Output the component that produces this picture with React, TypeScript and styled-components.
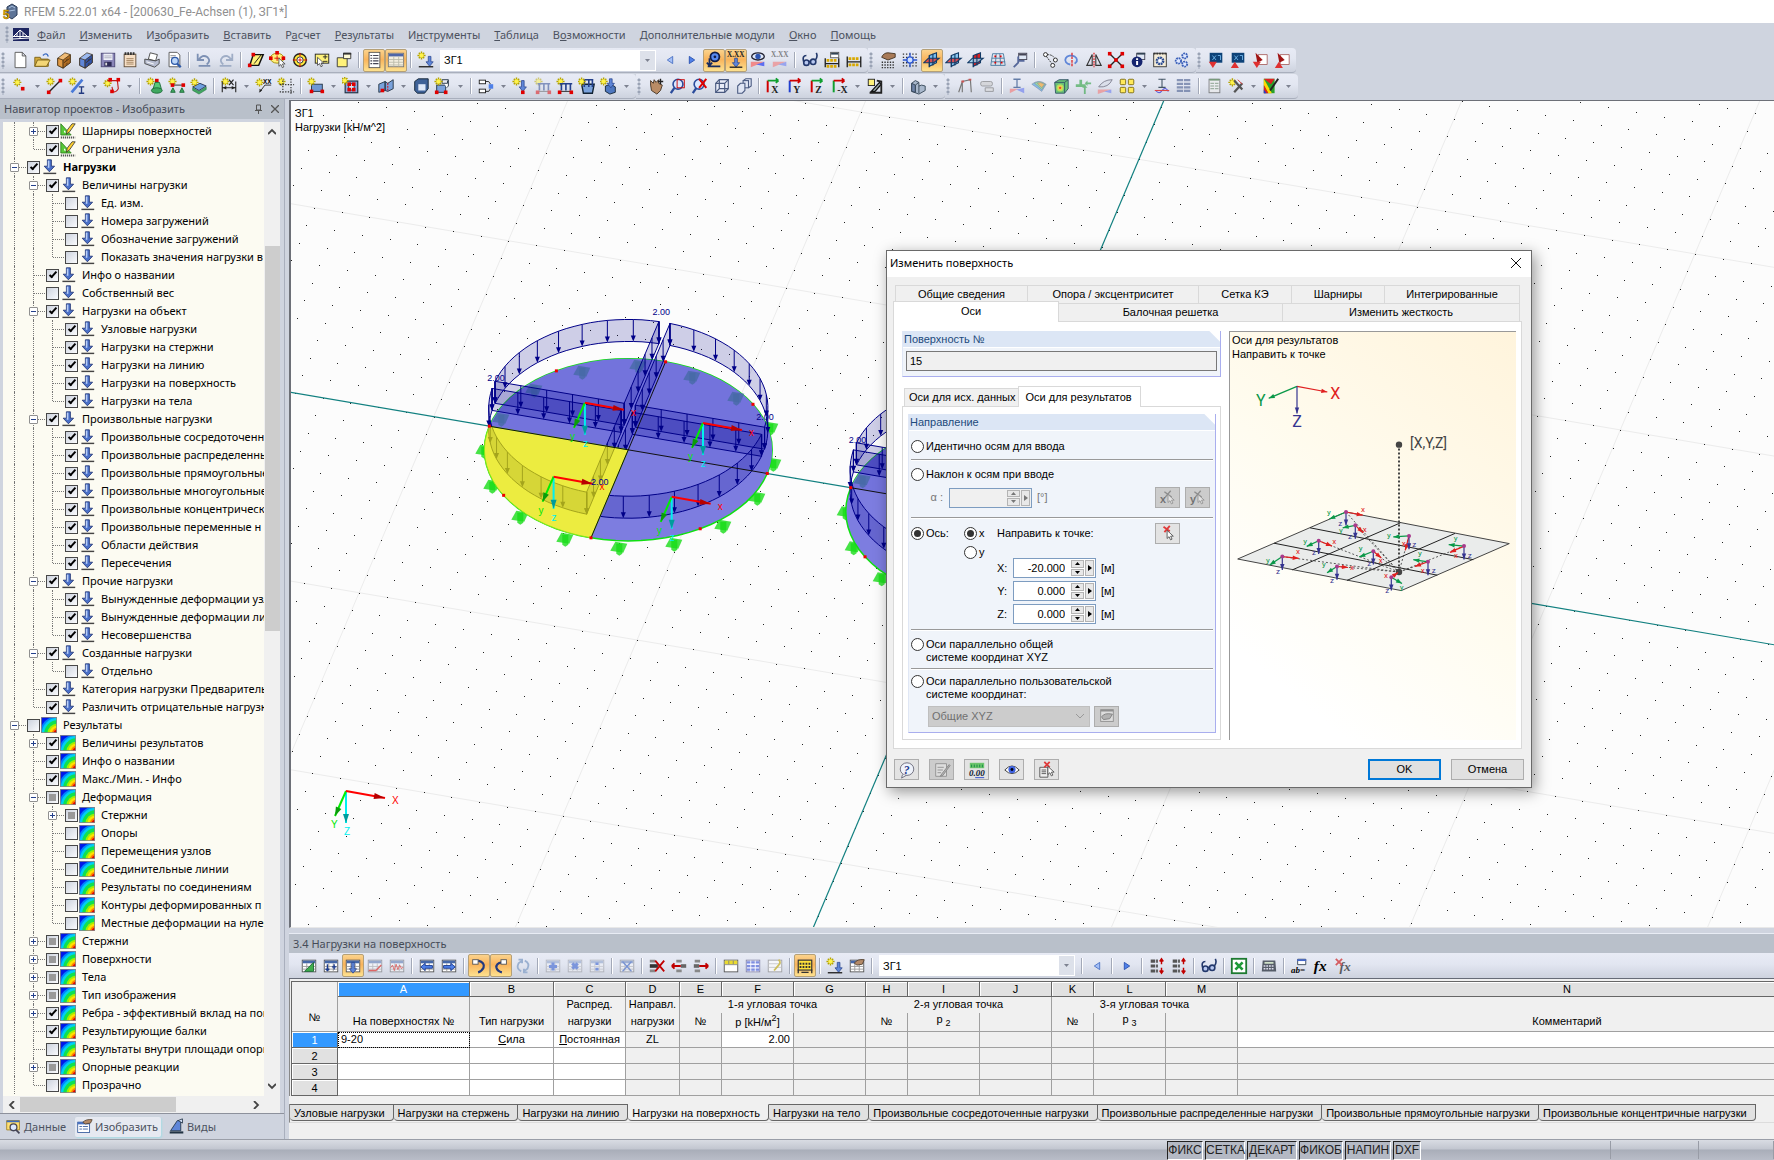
import React, { Fragment, ReactNode, useEffect, useRef } from "react";
import styled, { createGlobalStyle, css } from "styled-components";

const uiFont = `"Noto Sans", "Open Sans", sans-serif`;
const gridFont = `"Liberation Sans", Arial, sans-serif`;

const GlobalStyle = createGlobalStyle`
  *, *::before, *::after { box-sizing: border-box; }
  body { margin: 0; background: #cfd4df; font: 11px/14px ${uiFont}; color: #000; overflow: hidden; }
  button, input, select { font: inherit; color: inherit; margin: 0; }
  button { padding: 0; border: 0; background: none; }
  svg { display: block; }
`;

/* ------------------------------------------------------------------ */
/* Icons                                                                */
/* ------------------------------------------------------------------ */

const star = (x = 5, y = 5) => (
  <g transform={`translate(${x} ${y})`}>
    <path d="M0-4.5V4.5M-4.5 0H4.5M-3-3 3 3M3-3-3 3" stroke="#b5a400" strokeWidth="1.6" />
    <circle r="2.4" fill="#fff34a" />
  </g>
);
const cursor = (x: number, y: number) => (
  <path d={`M${x} ${y}v9l2.200-2 1.600 3.500 1.700-.8-1.600-3.300h3z`} fill="#fff" stroke="#444" strokeWidth=".9" />
);
const node = (x: number, y: number, c = "#e00000") => <rect x={x - 2} y={y - 2} width="4" height="4" fill={c} />;
const downArrow = (x: number, y: number, h = 9) => (
  <path d={`M${x - 1.5} ${y}h3v${h - 4}h2.500l-4 5-4-5h2.500z`} fill="#5f86d8" stroke="#24408c" strokeWidth=".8" />
);
const tableBack = (o = 1) => (
  <g opacity={o}>
    <rect x="2.500" y="3.500" width="15" height="13" fill="#fff" stroke="#555" />
    <rect x="3" y="4" width="14" height="3" fill="#4668a8" />
    <path d="M3 10.500h14M3 13.500h14M7.500 7v9M12.500 7v9" stroke="#999" />
  </g>
);
const drawer = (a: string, b: string, c: string) => (
  <g stroke="#3a2a14" strokeWidth=".8">
    <path d="M3 8l8-6 6 2v9l-8 6-6-3z" fill={a} />
    <path d="M3 8l6 2v9l-6-3z" fill={b} />
    <path d="M9 10l8-6v9l-8 6z" fill={c} />
    <path d="M10 13l6-4.500M12 10.500l2-1.500M12 15l2-1.500" fill="none" />
  </g>
);
const plane = (a: string, b: string) => (
  <g strokeWidth="1.200">
    <path d="M7 5l8-3v11l-8 4z" fill={a} stroke="#123a66" />
    <path d="M1 13l5-5h12l-6 5z" fill={b} stroke="#123a66" fillOpacity=".85" />
    <path d="M7 5v13M11 3v13" stroke="#123a66" />
  </g>
);
const axes = (c1: string, c2: string, t: string) => (
  <g fill="none">
    <path d="M3 17V4" stroke={c1} strokeWidth="2.200" />
    <path d="M3 4h12m0 0l-3-2.500m3 2.500l-3 2.500" stroke={c2} strokeWidth="2" />
    <text x="7" y="17.500" fontSize="11" fontWeight="700" fontFamily="Liberation Serif, serif" fill="#222">{t}</text>
  </g>
);

const icons: Record<string, ReactNode> = {
  new: <path d="M4.500 1.500h8l4 4v13h-12zM12.500 1.500v4h4" fill="#fff" stroke="#555" />,
  open: <g stroke="#7a6218"><path d="M2 7h6l1 2h8v8H2z" fill="#d3a93c" /><path d="M2 17l3-7h14l-4 7z" fill="#f3d676" /><path d="M11 5q4-4 6 1" fill="none" stroke="#3a6ac0" strokeWidth="1.500" /></g>,
  boxO: drawer("#f0bc78", "#e09a45", "#b06c22"),
  boxB: drawer("#9ab8f0", "#5f86d8", "#3153a8"),
  save: <g><rect x="2.500" y="2.500" width="15" height="15" fill="#8a86b8" stroke="#4f4b78" /><rect x="5" y="3" width="10" height="7" fill="#eceef6" /><path d="M6 5.500h8M6 7.500h8" stroke="#aab" /><rect x="6" y="12" width="8" height="5" fill="#2e2b55" /><rect x="7" y="13" width="2" height="3" fill="#ddd" /></g>,
  clip: <g><rect x="3.500" y="3.500" width="13" height="14" fill="#f6dfc6" stroke="#5f4a34" /><path d="M4 3h12" stroke="#333" strokeWidth="3" strokeDasharray="2 1" /><path d="M6 8.500h8M6 10.500h8M6 12.500h8M6 14.500h8" stroke="#a0805c" /></g>,
  print: <g stroke="#444"><path d="M6 9l2-7 8 2-2 7z" fill="#fff" /><path d="M2 9l12 2 4-2v5l-5 4-11-4z" fill="#b6bcd0" /><path d="M4 12l8 2.500" stroke="#fff" /></g>,
  preview: <g><path d="M4.500 1.500h9l3 3v13h-12z" fill="#fff" stroke="#555" /><path d="M6 5h6M6 7h6" stroke="#999" /><circle cx="11" cy="11" r="3.800" fill="#bcd6f8" stroke="#2f5aa8" strokeWidth="1.400" /><path d="M13.500 14l4 4" stroke="#2f5aa8" strokeWidth="2.500" /></g>,
  undo: <path d="M3 3v7h7M4 10q4-7 10-3 4 4-1 8M4 16.500h13" fill="none" stroke="#7d90b4" strokeWidth="2" />,
  redo: <path d="M17 3v7h-7M16 10q-4-7-10-3-4 4 1 8M3 16.500h13" fill="none" stroke="#9fadc6" strokeWidth="2" />,
  poly: <g><path d="M3 16L7 4h11l-5 12z" fill="#fff27a" stroke="#111" strokeWidth="1.600" />{node(7, 4)}{node(3, 16)}<path d="M8 14l8-10" stroke="#111" /></g>,
  selC: <g><ellipse cx="9" cy="8" rx="7.500" ry="5.500" fill="#fff27a" stroke="#a08800" />{node(2, 8)}{node(9, 2)}{node(16, 8)}<path d="M9 5v6M6 8h6" stroke="#e00000" />{cursor(11, 8)}</g>,
  target: <g><circle cx="10" cy="10" r="7" fill="#ffe93a" stroke="#222" strokeWidth="1.500" /><circle cx="10" cy="10" r="3.500" fill="#fff" stroke="#222" /><path d="M10 2v16M2 10h16" stroke="#e00000" strokeDasharray="4 2" /></g>,
  selBox: <g><rect x="2.500" y="3.500" width="15" height="10" fill="#fff27a" stroke="#222" /><path d="M11 6.500h5M13.500 4v5M11 11.500h5" stroke="#222" />{cursor(5, 7)}</g>,
  layer: <g stroke="#333"><path d="M2.500 7.500h11v10h-11z" fill="#fff27a" /><path d="M9.500 2.500h8v6h-8z" fill="#fffbd8" /><path d="M9 3h9" strokeWidth="2" /></g>,
  list: <g><rect x="4.500" y="1.500" width="12" height="17" fill="#fff" stroke="#555" /><path d="M6 5h2M9 5h6M6 8h2M9 8h6M6 11h2M9 11h6M6 14h2M9 14h6" stroke="#445" strokeWidth="1.200" /></g>,
  table: <g><rect x="1.500" y="2.500" width="17" height="15" fill="#f4efe0" stroke="#777" /><rect x="2" y="3" width="16" height="3" fill="#4f66a8" /><path d="M2 9.500h16M2 12.500h16M2 15.500h16M7.500 6v11M13 6v11" stroke="#bba" /></g>,
  starLoad: <g>{star(5, 5)}{downArrow(14, 6, 10)}<path d="M2 17.500h16" stroke="#222" strokeWidth="1.500" /></g>,
  prev: <path d="M13 6v8l-6-4z" fill="#a4bff6" stroke="#4a70c4" />,
  next: <path d="M7 6v8l6-4z" fill="#4f80e8" stroke="#2850b0" />,
  zoomLoad: <g><circle cx="11" cy="6.500" r="5" fill="#5a8af0" stroke="#101c48" strokeWidth="2" /><circle cx="11" cy="6.500" r="1.500" fill="#101c48" /><path d="M3 17h14M5 8v8M2 13l3 3 3-3" fill="none" stroke="#182c60" strokeWidth="2" /></g>,
  xxx: <g><text x="0" y="7" fontSize="8" fontWeight="700" fontFamily="Liberation Serif, serif" fill="#222">X.XX</text>{downArrow(10, 8, 9)}<path d="M3 18h14" stroke="#222" strokeWidth="1.500" /></g>,
  eyeLoad: <g><ellipse cx="10" cy="6" rx="7" ry="4" fill="#dfe8fa" stroke="#223" strokeWidth="1.500" /><circle cx="10" cy="6" r="3" fill="#2e55b0" /><path d="M2 12h15l-15 6z" fill="#f08a8a" /><path d="M17 12v5l-9-2z" fill="#5d6df0" /></g>,
  xxxDim: <g opacity=".7"><text x="0" y="7" fontSize="8" fontWeight="700" fontFamily="Liberation Serif, serif" fill="#555">X.XX</text><path d="M2 12h15l-15 6z" fill="#f08a8a" /><path d="M17 12v5l-9-2z" fill="#7d8df0" /></g>,
  glasses: <g fill="#b8c8f0" stroke="#23386c" strokeWidth="1.800"><circle cx="6" cy="13" r="3" /><circle cx="13.500" cy="12" r="3" /><path d="M3 12Q1 5 6 5M16 10q3-4 1-8M9 12l2-1" fill="none" /></g>,
  calcA: <g><rect x="8.500" y="1.500" width="9" height="6" fill="#fff" stroke="#555" /><path d="M9 3h8" stroke="#345" strokeWidth="2" /><path d="M2.500 8v10M17.500 8v10M3 14h15" stroke="#222" strokeWidth="1.500" /><path d="M4 10.500h12M4 17h12" stroke="#d8a800" strokeWidth="3" strokeDasharray="3 1" /></g>,
  calcB: <g><path d="M2.500 6v12M17.500 6v12M3 12h15" stroke="#222" strokeWidth="1.500" /><path d="M4 8.500h12M4 15.500h12" stroke="#d8a800" strokeWidth="3" strokeDasharray="3 1" /></g>,
  handGrid: <g><path d="M3 7q2-5 7-5l8 1v4l-8 3z" fill="#a87a58" stroke="#432" /><path d="M3 12.500h14M3 15.500h14M3 18.500h14" stroke="#333" strokeWidth="1.500" strokeDasharray="1.500 1.500" /></g>,
  snap: <g><path d="M2 3.500h16M2 7h16M2 13h16M2 16.500h16" stroke="#333" strokeWidth="1.500" strokeDasharray="1.500 2" /><path d="M10 2v16M2 10h16" stroke="#2a55d0" strokeWidth="1.500" /><circle cx="10" cy="10" r="3.500" fill="#cfe0ff" stroke="#2a55d0" strokeWidth="1.500" /></g>,
  planeA: plane("#7cc0f0", "#e43a3a"),
  planeB: plane("#8ccaf4", "#e43a3a"),
  planeC: plane("#e02020", "#9ad0ee"),
  gridR: <g fill="none" stroke="#4a7aa0"><path d="M4 3h12l2 13H2zM3 8h14M3 12h15M8 3l-1 13M12 3l1 13" /><path d="M6 6h2M12 6h2M6 13h2M13 13h2" stroke="#e00000" strokeWidth="2" /></g>,
  find: <g><rect x="8.500" y="2.500" width="9" height="7" fill="#dfe7f5" stroke="#445" /><path d="M9 4h8" stroke="#445" strokeWidth="2" /><path d="M8 6v7l-5 5M8 11h7" fill="none" stroke="#56689a" strokeWidth="2" /></g>,
  nodes: <g fill="#fff" stroke="#222"><circle cx="5" cy="4" r="2.200" /><circle cx="16" cy="10" r="2.200" /><circle cx="13" cy="16" r="2.200" /><path d="M6 6l6 8M7 4q6 0 8 4" fill="none" strokeDasharray="2 1" /></g>,
  rotate: <g fill="none" strokeWidth="2"><path d="M8 15a6.500 5 0 1 1 5-1l3-3" stroke="#5f86d8" /><path d="M10 2v16" stroke="#e00000" strokeWidth="1.200" strokeDasharray="3 1" /></g>,
  mirror: <g fill="none" stroke="#333" strokeWidth="1.200"><path d="M8 4v12H2zM12 4v12h6z" /><path d="M10 2v16" stroke="#e00000" strokeDasharray="2 1" /></g>,
  explode: <g><path d="M3 3l14 14M17 3L3 17" stroke="#222" strokeWidth="1.500" />{node(3, 3)}{node(17, 3)}{node(3, 17)}{node(17, 17)}{node(10, 10)}</g>,
  info: <g><rect x="8.500" y="2.500" width="9" height="7" fill="#dfe7f5" stroke="#445" /><path d="M9 3h9" stroke="#345" strokeWidth="2" /><circle cx="9" cy="12" r="6" fill="#15246e" /><path d="M9 8v2M9 11v4.500" stroke="#fff" strokeWidth="2.200" /></g>,
  gear: <g><rect x="3" y="2.500" width="14" height="15" fill="#f4ecd8" stroke="#333" /><path d="M3 3h14" stroke="#333" strokeWidth="2" strokeDasharray="2 1" /><circle cx="10" cy="11" r="3.500" fill="#fff" stroke="#2a4a90" strokeWidth="2.800" strokeDasharray="2 .7" /></g>,
  gears: <g fill="#dfe8ff" stroke="#3a5fb8" strokeWidth="2" strokeDasharray="2 .8"><circle cx="6" cy="11" r="3" /><circle cx="13" cy="5.500" r="2.800" /><circle cx="13" cy="14.500" r="2.800" /></g>,
  modA: <g><rect x="3" y="2" width="14" height="11" fill="#0d4278" /><path d="M6 5l4 5M10 5l-4 5M12 5h3v5" stroke="#6fb4ea" fill="none" /><path d="M2 12h9l-4.500 7z" fill="#e03030" /></g>,
  modB: <g><rect x="3" y="2" width="14" height="11" fill="#0d4278" /><path d="M6 5l4 5M10 5l-4 5M12 5h3v5" stroke="#6fb4ea" fill="none" /><path d="M2 19h9l-4.500-7z" fill="#e03030" /></g>,
  modC: <g><path d="M8 4h10v11H8z" fill="#fff" stroke="#a66" /><path d="M5 2l8 8-6 3z" fill="#a01414" /><path d="M2 12h9l-4.500 7z" fill="#e03030" /></g>,
  modD: <g><path d="M8 4h10v11H8z" fill="#fff" stroke="#a66" /><path d="M5 2l8 8-6 3z" fill="#a01414" /><path d="M2 19h9l-4.500-7z" fill="#e03030" /></g>,

  mkNode: <g>{star(7, 6)}{node(13, 13)}</g>,
  mkLine: <g>{star()}<path d="M3 17L16 4" stroke="#222" strokeWidth="1.500" />{node(3, 17)}{node(16, 4)}</g>,
  mkMember: <g>{star()}<path d="M4 17L16 3" stroke="#4a7ad8" strokeWidth="3" /><path d="M12 11h6M15 11v7M12 18h6" stroke="#223a80" strokeWidth="1.500" /></g>,
  mkPoly: <g>{star(5, 7)}<path d="M5 4h11l1 9q-3 5-6 3l-1-5" fill="none" stroke="#c01818" strokeWidth="1.200" />{node(8, 3)}{node(17, 3)}{node(10, 16)}</g>,
  mkSupport: <g>{node(12, 4)}<path d="M10 6h5l2 7h-9z" fill="#58c878" stroke="#1d6a38" /><ellipse cx="12" cy="15" rx="6" ry="3" fill="#3fa860" stroke="#1d6a38" />{star()}</g>,
  mkLineSup: <g>{star()}<path d="M5 9h12" stroke="#222" />{node(5, 9)}{node(17, 9)}<path d="M3 17l2.500-5L8 17zM13 17l2.500-5 2.500 5z" fill="#3fa860" stroke="#1d6a38" /></g>,
  mkSurfSup: <g><path d="M3 11l8-4 7 3-8 5z" fill="#6fa0e0" stroke="#235" /><path d="M3 12v3l7 4 8-5v-3l-8 5z" fill="#3fa860" stroke="#1d6a38" strokeWidth=".6" />{star(5, 6)}</g>,
  dim: <g>{star(6, 5)}<path d="M2.500 5v12M17.500 5v12M3 12h14" stroke="#222" strokeWidth="1.200" /><path d="M3 12l4-2v4zM17 12l-4-2v4z" fill="#222" /><path d="M10 3l5 6M15 3l-5 6" stroke="#222" strokeWidth="1.300" /></g>,
  annot: <g>{star(5, 6)}<path d="M5 17l6-8h7" fill="none" stroke="#222" /><path d="M5 17v-4l3 2z" fill="#222" /><text x="9" y="8" fontSize="7" fontWeight="700" fontFamily={gridFont}>XX</text></g>,
  guides: <g>{star(5, 5)}<path d="M6.500 4v15M15.500 2v17M3 8.500h16M3 16.500h16" stroke="#333" strokeWidth="1.300" strokeDasharray="1.500 1.500" /></g>,
  mkSurf: <g><rect x="5" y="8" width="12" height="8" fill="#6f98d4" stroke="#234" />{star(5, 5)}{node(5, 16)}{node(17, 16)}</g>,
  mkOpen: <g><rect x="3.500" y="4.500" width="14" height="13" fill="#88a8dc" stroke="#234" strokeWidth="1.300" /><rect x="7.500" y="7.500" width="6" height="7" fill="#dce6f8" stroke="#234" />{node(8, 8)}{node(13, 8)}{node(8, 14)}{node(13, 14)}{star(3, 4)}</g>,
  mkSolidA: <g><path d="M2 8l7-3v10l-7 2zM9 5l3 2 6-4v10l-6 3-3-1z" fill="#7aa2dc" stroke="#234" /><path d="M12 7v9" stroke="#e00000" strokeDasharray="2 1" />{node(6, 15)}</g>,
  mkSolidB: <g><path d="M3 5l4-3h11v11l-4 5H6l-3-3z" fill="#3f6298" stroke="#123" /><path d="M7 8h8v7H7z" fill="#dfe8f8" /></g>,
  mkSolidC: <g><rect x="3" y="9" width="10" height="8" fill="#7aa2dc" stroke="#234" /><path d="M9 3h7v7l-2 2M9 3v4h6V4" fill="#fff" stroke="#234" />{star(5, 5)}{node(3, 17)}{node(13, 17)}</g>,
  hinge: <g><rect x="2.500" y="3.500" width="7" height="4" fill="#fff" stroke="#222" /><rect x="2.500" y="13.500" width="7" height="4" fill="#fff" stroke="#222" /><path d="M9 5h4l2 3M9 16h4l2-3" fill="none" stroke="#222" /><rect x="13" y="8" width="5" height="5" fill="#4f80e8" /></g>,
  loadN: <g>{star()}{downArrow(12, 4, 11)}{node(12, 17)}</g>,
  loadM: <g opacity=".5">{star()}<path d="M4 7.500h14M6 8v7M11 8v7M16 8v7" stroke="#24408c" strokeWidth="1.800" /><path d="M3 16h15" stroke="#444" />{node(4, 17)}{node(17, 17)}</g>,
  loadL: <g>{star()}<path d="M4 7.500h14M6 8v7M11 8v7M16 8v7" stroke="#24408c" strokeWidth="1.800" /><path d="M3 16h15" stroke="#222" />{node(4, 17)}{node(17, 17)}</g>,
  loadS: <g><path d="M4 8h14l-2 10H6z" fill="#7aa2dc" stroke="#123" strokeWidth="1.500" /><path d="M7 3h10M7 3v8M12 3v8M16 3v8" stroke="#24408c" strokeWidth="1.800" />{star(4, 5)}</g>,
  loadV: <g><path d="M6 10l6-2 5 3v6l-6 2-5-3z" fill="#4f78c0" stroke="#123" />{star(4, 5)}{downArrow(12, 2, 9)}</g>,
  pan: <g><path d="M4 9V4l3 3 1-4 2 3 3-3v4l4 2-2 6-4 4-6-4z" fill="#b98c66" stroke="#432" /><path d="M12 5h6M15 2v6" stroke="#222" strokeWidth="1.500" /></g>,
  zoomWin: <g><circle cx="10" cy="8" r="5.500" fill="#dbe8ff" stroke="#2b4c9c" strokeWidth="1.800" /><rect x="9" y="3" width="8" height="9" fill="none" stroke="#c00" /><path d="M6 12l-4 6" stroke="#2b4c9c" strokeWidth="2.500" /></g>,
  zoomX: <g><circle cx="9" cy="8" r="5.500" fill="#dbe8ff" stroke="#2b4c9c" strokeWidth="1.800" /><path d="M9 2l8 10M17 2l-8 10" stroke="#d00" strokeWidth="2.200" /><path d="M6 12l-4 6" stroke="#2b4c9c" strokeWidth="2.500" /></g>,
  cube: <g fill="#e9edf8" stroke="#4a5a80" strokeWidth="1.300"><path d="M3 7l4-4h10v10l-4 4H3z" /><path d="M3 7h10v10M13 7l4-4M7 3v10l-4 4M7 13h10" fill="none" /></g>,
  iso: <g fill="#dfe5f4" stroke="#4a5a80" strokeWidth="1.200"><path d="M9 4l3-2h6v8l-3 2" /><rect x="9" y="4" width="6" height="8" /><path d="M3 10l3-3h5v8l-3 3H3z" /></g>,
  axX: axes("#d00000", "#10a030", "X"),
  axY: axes("#2040d0", "#d00000", "Y"),
  axZ: axes("#d00000", "#10a030", "Z"),
  axN: axes("#10a030", "#d00000", "-X"),
  clipView: <g><path d="M6 16l9-10 2 2-7 8z" fill="#9aa" stroke="#111" strokeWidth="1.500" /><rect x="2.500" y="2.500" width="7" height="7" fill="#fff27a" stroke="#222" /><path d="M4 17.500h14M12 4l5 1v12" fill="none" stroke="#222" strokeWidth="2" /></g>,
  solid: <g stroke="#345" fill="#a9b8cc"><path d="M3 7l4-3 4 2v4l3-1 4 1v5l-7 4-8-3z" /><path d="M7 9v8M7 9l4-3M11 10v8" fill="none" /><path d="M3 7l4 2v8l-4-1z" fill="#6f84a8" /></g>,
  frame: <g fill="none" stroke="#777" strokeWidth="1.300"><path d="M3 17L7 5l9-2 1 14M7 5v12" /><path d="M6 5h3M14 3h3" stroke="#c55" strokeWidth="2" /></g>,
  roll: <g opacity=".6"><rect x="3" y="5" width="13" height="5" rx="2" fill="#ccc" stroke="#666" /><path d="M8 12h9v4H8z" fill="#ddd" stroke="#666" /></g>,
  resN: <g opacity=".75"><path d="M6 2.500h8M10 3v8M6 11.500h8" stroke="#3a5a90" strokeWidth="1.400" /><path d="M2 13h10l-10 5z" fill="#f08a8a" /><path d="M18 12v6l-9-4z" fill="#7d8df0" /></g>,
  resS: <g opacity=".8" strokeWidth=".6" stroke="#678"><path d="M2 8q7-6 16 0l-5 8q-5-4-11-8z" fill="#6fb0e8" /><path d="M5 7q6-4 12 1l-4 6q-4-4-8-7z" fill="#88dc90" /><path d="M8 7q4-2 8 1l-3 4q-3-3-5-5z" fill="#f0b050" /></g>,
  resV: <g><path d="M3 6l5-3h10v10l-4 5H4z" fill="#68c078" stroke="#356" /><path d="M3 6h11v12M14 6l4-3" fill="none" stroke="#356" /><circle cx="9" cy="12" r="4" fill="#b8e060" /><circle cx="9" cy="12" r="2.500" fill="#f4d04a" /><circle cx="9" cy="12" r="1.300" fill="#e05030" /></g>,
  resR: <g fill="#4fae60" opacity=".75"><path d="M6 3h3v5h4v3H2V8h4zM11 19v-7h-2l3-3 3 3h-2v7zM19 6h-4V4l-3 3 3 3V8h4z" /></g>,
  resC: <g opacity=".7"><path d="M3 11q5-8 15-8-4 9-15 8z" fill="#d8dde8" stroke="#556" /><path d="M2 14h15l-15 5z" fill="#f08a8a" /><path d="M17 14v4l-8-2z" fill="#7d8df0" /></g>,
  panels: <g fill="#ffe95a" stroke="#7a6a10"><rect x="2.500" y="2.500" width="6" height="6" rx="1" /><rect x="11.500" y="2.500" width="6" height="6" rx="1" /><rect x="2.500" y="11.500" width="6" height="6" rx="1" /><rect x="11.500" y="11.500" width="6" height="6" rx="1" /></g>,
  section: <g fill="none" stroke="#456" strokeWidth="1.200"><path d="M6 2.500h8M10 3v8M6 11.500h8" /><path d="M3 15q4 5 7 0 4-5 7 1" stroke="#55d" /><path d="M2 15h16" stroke="#d44" /></g>,
  rep: <g opacity=".8"><path d="M2 3.500h16M2 7.500h16M2 11.500h16M2 15.500h16" stroke="#7080a8" strokeWidth="2.500" strokeDasharray="7 1" /></g>,
  doc: <g opacity=".7"><rect x="4.500" y="2.500" width="12" height="15" fill="#eee" stroke="#555" /><path d="M5 3h11" stroke="#4a7a4a" strokeWidth="2" /><path d="M6 7h4M11 7h4M6 10h4M11 10h4M6 13h4M11 13h4" stroke="#5a7a5a" /></g>,
  tune: <g>{star(6, 6)}<path d="M8 4l9 10M8 17l9-10" stroke="#555" strokeWidth="2.500" /><path d="M12 3l5 5" stroke="#d33" /></g>,
  colorBar: <g><rect x="2" y="2" width="12" height="16" fill="#2aa02a" /><path d="M2 2h12l-4 6z" fill="#e02020" /><path d="M2 2l9 16H7L2 9z" fill="#ffd800" /><path d="M2 9l5 9H2z" fill="#e02020" /><path d="M2 14l3 4H2z" fill="#2040d0" /><path d="M18 2L9 15" stroke="#222" strokeWidth="2.200" /></g>,

  tNew: <g>{tableBack()}<path d="M5 16L15 6v10z" fill="#3fae4c" stroke="#1d6a38" /></g>,
  tPlus: <g>{tableBack()}<path d="M6 8v7M4 13l2 2 2-2M11 11h5M13.500 8v6" stroke="#1a3a90" strokeWidth="1.500" fill="none" /></g>,
  tLoad: <g>{tableBack()}{downArrow(10, 6, 11)}</g>,
  tRes: <g>{tableBack(0.5)}<path d="M3 15h8l6-6" stroke="#d66" fill="none" strokeWidth="1.500" /></g>,
  tWave: <g>{tableBack(0.5)}<path d="M3 12l2-3 2 6 2-7 2 6 2-5 2 4 2-2" stroke="#d66" fill="none" /></g>,
  tLeft: <g>{tableBack()}<path d="M3 11l5-4v2.500h8v3H8V15z" fill="#4f80e8" stroke="#1a3a90" /></g>,
  tRight: <g>{tableBack()}<path d="M17 11l-5-4v2.500H4v3h8V15z" fill="#4f80e8" stroke="#1a3a90" /></g>,
  curA: <g fill="none" stroke="#223a80" strokeWidth="2.500"><path d="M9 4q8 2 6 8-2 4-6 5" /><rect x="3" y="3" width="6" height="5" fill="#fff" stroke="#555" strokeWidth="1" /></g>,
  curB: <g fill="none" stroke="#223a80" strokeWidth="2.500"><path d="M11 6q-7 1-6 6 1 4 6 5" /><rect x="10" y="3" width="6" height="5" fill="#fff" stroke="#555" strokeWidth="1" /></g>,
  sync: <path d="M8 16Q2 13 5 7l4-3M12 4q6 3 3 9l-4 3M5 3h4v4M15 17h-4v-4" fill="none" stroke="#9ab0d0" strokeWidth="2" />,
  dPlus: <g opacity=".6">{tableBack(0.5)}<path d="M10 6v9M5.500 10.500h9" stroke="#3a62d0" strokeWidth="3.500" /></g>,
  dStar: <g opacity=".6">{tableBack(0.5)}<path d="M7 7l6 6M13 7l-6 6" stroke="#3a62d0" strokeWidth="3.500" /></g>,
  dDots: <g opacity=".6">{tableBack(0.5)}<path d="M10 6v3M10 12v3" stroke="#3a62d0" strokeWidth="3.500" /></g>,
  dX: <g opacity=".7">{tableBack(0.6)}<path d="M5 5l10 11M15 5L5 16" stroke="#4a70c8" strokeWidth="1.500" /></g>,
  rowDel: <g><path d="M2 4.500h6M2 15.500h6" stroke="#888" strokeWidth="3" /><path d="M2 10h9" stroke="#333" strokeWidth="4" /><path d="M8 4l10 12M18 4L8 16" stroke="#c00000" strokeWidth="2" /></g>,
  rowOut: <g><path d="M7 4.500h6M7 15.500h6" stroke="#888" strokeWidth="3" /><path d="M12 10h6" stroke="#666" strokeWidth="4" /><path d="M12 10H2m0 0l3-3m-3 3l3 3" stroke="#c00000" strokeWidth="2" fill="none" /></g>,
  rowIn: <g><path d="M3 4.500h6M3 15.500h6" stroke="#888" strokeWidth="3" /><path d="M2 10h6" stroke="#666" strokeWidth="4" /><path d="M8 10h10m0 0l-3-3m3 3l-3 3" stroke="#c00000" strokeWidth="2" fill="none" /></g>,
  fmtA: <g><rect x="2.500" y="3.500" width="15" height="13" fill="#fff" stroke="#555" /><path d="M3 6h14" stroke="#eadb30" strokeWidth="4" /><path d="M3 8.500h14M7.500 4v4M12.500 4v4" stroke="#887" /></g>,
  fmtB: <g><rect x="2.500" y="3.500" width="15" height="13" fill="#eef" stroke="#88a" /><path d="M3 6h14M3 10h14M3 14h14" stroke="#7f8fe0" strokeWidth="2.500" /><path d="M7.500 4v12M12.500 4v12" stroke="#fff" /></g>,
  fmtC: <g opacity=".7"><rect x="2.500" y="3.500" width="15" height="13" fill="#fff" stroke="#888" /><path d="M3 7.500h14M3 11.500h14" stroke="#bbb" /><path d="M14 3q3 3 0 6l-5 6" stroke="#c8b020" strokeWidth="2" fill="none" /></g>,
  calcY: <g><rect x="2.500" y="3.500" width="15" height="11" fill="#ffe23a" stroke="#333" strokeWidth="1.300" /><path d="M4 7.500h12M4 11h12" stroke="#333" strokeWidth="2.200" strokeDasharray="2 1.300" /><path d="M2.500 14v4M17.500 14v4M6 17h8" stroke="#333" strokeWidth="1.500" /></g>,
  tEdit: <g>{tableBack()}<path d="M7 7q3-5 11-4l-2 5-6 1z" fill="#b48a68" stroke="#543" /></g>,
  rowsUp: <g><path d="M3 4.500h8M3 10h8M3 15.500h8" stroke="#555" strokeWidth="3.500" strokeDasharray="5 1" /><path d="M15 3v5M15 12v5M13 5l2-3 2 3M13 15l2 3 2-3" stroke="#c00000" strokeWidth="1.600" fill="none" /></g>,
  excel: <g><rect x="2" y="2" width="16" height="16" fill="#fff" stroke="#1d7a30" strokeWidth="2" /><path d="M6 6l8 8M14 6l-8 8" stroke="#1d9a38" strokeWidth="3" /></g>,
  calc: <g><path d="M3 4h14l1 12H2z" fill="#555c68" /><path d="M5 6.500h10" stroke="#cfe0c8" strokeWidth="2" /><path d="M4 10h12M4 13h12" stroke="#dde" strokeWidth="1.500" strokeDasharray="2 1" /></g>,
  abEq: <g><path d="M8.500 2.500h9v6h-9z" fill="#fff" stroke="#345" /><path d="M8 3.500h10" stroke="#4668c8" strokeWidth="2" /><text x="1" y="18" fontSize="10" fontStyle="italic" fontWeight="700" fontFamily="Liberation Serif, serif">ab=</text></g>,
  fx: <text x="2" y="15" fontSize="17" fontStyle="italic" fontWeight="700" fontFamily="Liberation Serif, serif">fx</text>,
  fxDel: <g opacity=".6"><text x="6" y="16" fontSize="15" fontStyle="italic" fontWeight="700" fontFamily="Liberation Serif, serif">fx</text><path d="M2 2l7 7M9 2L2 9" stroke="#c00" strokeWidth="2" /></g>,

  treeLoad: <g><path d="M8 1h5v8h4l-6.500 7L4 9h4z" fill="#4a70c8" stroke="#1c2f70" /><path d="M9.500 2v9" stroke="#b9cff8" strokeWidth="2" /><path d="M3 18h16" stroke="#444" strokeWidth="1.800" /></g>,
  treeRule: <g><path d="M1 1v14h13z" fill="#58c838" stroke="#2a7a1a" /><path d="M5 9v3h3z" fill="#fff" /><path d="M19 1l-7 10-4 3 1-5 6-8z" fill="#ffd030" stroke="#333" /><path d="M1 18h18" stroke="#555" strokeWidth="2.500" strokeDasharray="1.500 1" /></g>,
  treeRes: (
    <g>
      <rect width="20" height="20" fill="#0018e8" />
      <circle cx="21" cy="21" r="22.500" fill="#0080ff" />
      <circle cx="21" cy="21" r="20" fill="#00d0f0" />
      <circle cx="21" cy="21" r="17" fill="#10e050" />
      <circle cx="21" cy="21" r="13" fill="#a0f000" />
      <circle cx="21" cy="21" r="10.500" fill="#ffe000" />
      <circle cx="21" cy="21" r="7.500" fill="#ff8000" />
      <circle cx="21" cy="21" r="5.500" fill="#e00000" />
      <rect x=".5" y=".5" width="19" height="19" fill="none" stroke="#888" />
    </g>
  ),
  navData: <g><path d="M2 3h15v11H2z" fill="#ffe070" stroke="#a08020" /><path d="M2 4h15" stroke="#3a6ac0" strokeWidth="2" /><circle cx="10" cy="11" r="4" fill="#dbe8ff" stroke="#445" strokeWidth="1.500" /><path d="M13 14l4 4" stroke="#445" strokeWidth="2" /></g>,
  navShow: <g><rect x="2" y="5" width="14" height="12" fill="#fff" stroke="#345a9c" /><path d="M2 6h14" stroke="#4a72c0" strokeWidth="3" /><path d="M4 10h3M8 10h6M4 13h3M8 13h6" stroke="#345a9c" /><path d="M8 5q4-4 11-3l-2 4-6 1z" fill="#b48a68" stroke="#543" /></g>,
  navViews: <g><path d="M3 15l8-12h4v12z" fill="#5f86d8" stroke="#234" /><path d="M2 17h16" stroke="#234" strokeWidth="2.500" /><path d="M12 3l5-2v5z" fill="#dbe8ff" stroke="#234" /></g>,

  help: <g><ellipse cx="10" cy="9" rx="7.500" ry="7" fill="#eef2fa" stroke="#667" /><text x="6.500" y="14" fontSize="13" fontWeight="700" fontStyle="italic" fontFamily="Liberation Serif, serif" fill="#1a3a90">?</text><path d="M5 15l-1 4 5-3" fill="#eef2fa" stroke="#667" /></g>,
  edit: <g opacity=".5"><path d="M3 3h12v14H3z" fill="#eee" stroke="#555" /><path d="M5 7h7M5 10h6M5 13h4" stroke="#555" /><path d="M18 4l-8 10-2 3 3-1 8-11z" fill="#999" stroke="#444" /></g>,
  units: <g><path d="M2 2h16v6H2z" fill="#6cc46c" /><path d="M4 4v3M7 4v3M10 4v3M13 4v3M16 4v3" stroke="#184" /><text x="1" y="17" fontSize="10" fontStyle="italic" fontWeight="700" fontFamily="Liberation Serif, serif" fill="#123">0.00</text><path d="M8 18.500h10" stroke="#24c" /></g>,
  eye: <g><path d="M2 10q8-9 16 0-8 8-16 0z" fill="#fff" stroke="#333" /><circle cx="10" cy="9.500" r="4" fill="#3f63e0" /><circle cx="10" cy="9.500" r="1.600" fill="#001" /></g>,
  pickDoc: <g><path d="M2 7h9v11H2z" fill="#eee" stroke="#555" /><path d="M4 10h5M4 12h5M4 14h5" stroke="#555" /><path d="M7 1l6 6M13 1L7 7" stroke="#e03a3a" strokeWidth="2" />{cursor(11, 6)}</g>,
  pick: <g><path d="M5 2l7 5M12 1L6 8" stroke="#e03a3a" strokeWidth="2" />{cursor(9, 6)}</g>,
  pickX: <g opacity=".45"><text x="1" y="16" fontSize="12" fontWeight="700" fontFamily={gridFont}>x</text><path d="M6 3l8 6M13 2L7 9" stroke="#444" strokeWidth="1.500" />{cursor(10, 6)}</g>,
  pickY: <g opacity=".45"><text x="1" y="16" fontSize="12" fontWeight="700" fontFamily={gridFont}>y</text><path d="M6 3l8 6M13 2L7 9" stroke="#444" strokeWidth="1.500" />{cursor(10, 6)}</g>,
  csEdit: <g opacity=".5"><rect x="3" y="3" width="14" height="13" fill="#eee" stroke="#555" /><path d="M3 4h14" stroke="#555" strokeWidth="2" /><path d="M4 11q3-5 12-3l-3 5-7 1z" fill="#999" stroke="#333" /></g>,
};

const Glyph = ({ name, size = 20 }: { name: string; size?: number }) => (
  <svg width={size} height={size} viewBox="0 0 20 20" aria-hidden="true">
    {icons[name]}
  </svg>
);

/* ------------------------------------------------------------------ */
/* Window chrome                                                        */
/* ------------------------------------------------------------------ */

const Window = styled.div`
  display: flex;
  flex-direction: column;
  height: 100vh;
  background: #cfd4df;
`;
const TitleBar = styled.header`
  display: flex;
  align-items: center;
  gap: 6px;
  height: 23px;
  padding-left: 2px;
  background: #fff;
  color: #8f8f8f;
  font: 12px/20px Roboto, ${uiFont};
`;
const MenuBar = styled.nav`
  display: flex;
  align-items: center;
  height: 25px;
  padding: 0 0 2px 4px;
  color: #4c5260;
`;
const MenuButton = styled.button`
  height: 20px;
  padding: 0 7px;
  &:first-of-type { margin-left: 1px; }
`;
const Grip = styled.span`
  flex: none;
  width: 6px;
  height: 17px;
  margin-right: 3px;
  background: radial-gradient(circle at 3px 2px, #9aa3b5 1px, transparent 2px) 0 0 / 6px 4px;
`;
const BarRow = styled.div<{ $h: number }>`
  display: flex;
  height: ${(p) => p.$h}px;
  background: #cfd4df;
`;
const Band = styled.div`
  display: flex;
  align-items: center;
  height: 25px;
  padding-right: 3px;
  border-bottom: 1px solid #a9afbd;
  border-radius: 0 4px 4px 0;
  background: linear-gradient(#e8ebf5, #e2e6f1 45%, #cdd2de);
`;
const ToolButton = styled.button<{ $on?: boolean }>`
  display: grid;
  place-items: center;
  flex: none;
  width: 22px;
  height: 23px;
  border: 1px solid transparent;
  ${(p) =>
    p.$on &&
    css`
      border-color: #b5a077;
      border-radius: 2px;
      background: linear-gradient(#fbd38d, #f9b45c 45%, #fde18f);
    `}
`;
const DropButton = styled.button`
  display: grid;
  place-items: center;
  flex: none;
  width: 13px;
  height: 23px;
`;
const Separator = styled.span`
  flex: none;
  width: 1px;
  height: 16px;
  margin: 0 4px 0 3px;
  background: #a3a9b8;
  box-shadow: 1px 0 #fff;
`;
const Combo = styled.div<{ $width: number }>`
  display: grid;
  grid-template-columns: 1fr 15px;
  align-items: stretch;
  flex: none;
  width: ${(p) => p.$width}px;
  height: 21px;
  margin: 0 3px;
  border: 1px solid #fff;
  background: #fff;
  font: 11px/18px ${gridFont};
  select {
    grid-area: 1 / 1 / 2 / 3;
    appearance: none;
    border: 0;
    padding: 0 18px 0 3px;
    background: transparent;
    outline: none;
  }
  span {
    grid-area: 1 / 2 / 2 / 3;
    display: grid;
    place-items: center;
    background: #dde1ea;
    pointer-events: none;
  }
`;

const Triangle = () => (
  <svg width="5" height="3" viewBox="0 0 5 3" aria-hidden="true">
    <path d="M0 0h5L2.500 3z" fill="#7d8290" />
  </svg>
);

/* A tool strip: "|" is a separator, a leading "+" marks a pressed tool,
   a trailing ".v" marks a tool with a drop-down part. */
const Tools = ({ items }: { items: string }) => (
  <>
    {items.split(" ").map((raw, i) => {
      if (raw === "|") return <Separator key={i} />;
      const on = raw.startsWith("+");
      const drop = raw.endsWith(".v");
      const name = raw.replace("+", "").replace(".v", "");
      return (
        <Fragment key={i}>
          <ToolButton $on={on} aria-label={name} aria-pressed={on || undefined}>
            <Glyph name={name} size={18} />
          </ToolButton>
          {drop && (
            <DropButton aria-label={`${name} menu`}>
              <Triangle />
            </DropButton>
          )}
        </Fragment>
      );
    })}
  </>
);

const LoadCaseSelect = ({ width, id }: { width: number; id: string }) => (
  <Combo $width={width}>
    <select id={id} aria-label="Загружение" defaultValue="lc1">
      <option value="lc1">ЗГ1</option>
    </select>
    <span>
      <Triangle />
    </span>
  </Combo>
);

const menus: [string, string, string][] = [
  ["", "Ф", "айл"],
  ["", "И", "зменить"],
  ["И", "з", "образить"],
  ["", "В", "ставить"],
  ["Р", "а", "счет"],
  ["", "Р", "езультаты"],
  ["И", "н", "струменты"],
  ["", "Т", "аблица"],
  ["В", "о", "зможности"],
  ["", "Д", "ополнительные модули"],
  ["", "О", "кно"],
  ["", "П", "омощь"],
];

/* ------------------------------------------------------------------ */
/* Navigator                                                            */
/* ------------------------------------------------------------------ */

const Workspace = styled.div`
  display: grid;
  grid-template-columns: 285px minmax(0, 1fr);
  column-gap: 4px;
  flex: 1;
  min-height: 0;
`;
const Navigator = styled.aside`
  display: flex;
  flex-direction: column;
  min-height: 0;
  border-right: 1px solid #a9afbd;
`;
const PaneTitle = styled.h2`
  display: flex;
  align-items: center;
  flex: none;
  gap: 8px;
  height: 20px;
  margin: 0 0 3px;
  padding: 0 5px 0 4px;
  background: #b9c0ca;
  color: #454b57;
  font: 11px/18px ${uiFont};
  svg:first-of-type { margin-left: auto; }
`;
const TreeFrame = styled.div`
  display: grid;
  grid-template-columns: minmax(0, 1fr) 16px;
  grid-template-rows: minmax(0, 1fr) 17px;
  flex: 1;
  min-height: 0;
  margin: 0 4px 0 3px;
  background: #f0f0f0;
`;
const Tree = styled.ul`
  margin: 0;
  padding: 0 0 0 2px;
  overflow: hidden;
  list-style: none;
  background: #fcfbf2;
`;
const TreeItem = styled.li`
  display: flex;
  align-items: center;
  height: 18px;
  white-space: nowrap;
`;
const Guide = styled.span<{ $line?: boolean; $own?: boolean; $last?: boolean }>`
  display: grid;
  place-items: center;
  flex: none;
  position: relative;
  width: 19px;
  height: 18px;
  &::before {
    content: "";
    position: absolute;
    left: 9px;
    top: 0;
    height: ${(p) => (p.$last ? 9 : 18)}px;
    border-left: ${(p) => (p.$line || p.$own ? "1px dotted #777" : "0")};
  }
  &::after {
    content: "";
    position: absolute;
    left: 10px;
    top: 9px;
    width: 11px;
    border-top: ${(p) => (p.$own ? "1px dotted #777" : "0")};
  }
`;
const Expander = styled.button`
  display: grid;
  place-items: center;
  z-index: 1;
  width: 9px;
  height: 9px;
  border: 1px solid #909090;
  border-radius: 1px;
  background: #fff;
`;
const TreeLabel = styled.label<{ $bold?: boolean }>`
  display: flex;
  align-items: center;
  height: 18px;
  font-weight: ${(p) => (p.$bold ? 700 : 400)};
  svg { margin: 0 6px 0 1px; flex: none; }
`;
const Box = styled.input<{ $mixed?: boolean }>`
  appearance: none;
  display: grid;
  place-items: center;
  flex: none;
  width: 13px;
  height: 13px;
  margin: 0 0 0 3px;
  border: 1px solid #484848;
  background: linear-gradient(135deg, #cdd3de, #fafbfd);
  &::after {
    content: "";
    width: ${(p) => (p.$mixed ? 7 : 4)}px;
    height: 7px;
    background: ${(p) => (p.$mixed ? "#999" : "transparent")};
  }
  &:checked::after {
    height: 8px;
    margin-top: -2px;
    border: solid #000;
    border-width: 0 2px 2px 0;
    transform: rotate(42deg);
  }
`;

type Row = [depth: number, exp: string, state: "x" | "o" | "m", icon: string, text: string];
const L = "treeLoad";
const R = "treeRes";
const tree: Row[] = [
  [1, "+", "x", "treeRule", "Шарниры поверхностей"],
  [1, "", "x", "treeRule", "Ограничения узла"],
  [0, "-", "x", L, "Нагрузки"],
  [1, "-", "x", L, "Величины нагрузки"],
  [2, "", "o", L, "Ед. изм."],
  [2, "", "o", L, "Номера загружений"],
  [2, "", "o", L, "Обозначение загружений"],
  [2, "", "o", L, "Показать значения нагрузки в"],
  [1, "", "x", L, "Инфо о названии"],
  [1, "", "o", L, "Собственный вес"],
  [1, "-", "x", L, "Нагрузки на объект"],
  [2, "", "x", L, "Узловые нагрузки"],
  [2, "", "x", L, "Нагрузки на стержни"],
  [2, "", "x", L, "Нагрузки на линию"],
  [2, "", "x", L, "Нагрузки на поверхность"],
  [2, "", "x", L, "Нагрузки на тела"],
  [1, "-", "x", L, "Произвольные нагрузки"],
  [2, "", "x", L, "Произвольные сосредоточенные"],
  [2, "", "x", L, "Произвольные распределенные"],
  [2, "", "x", L, "Произвольные прямоугольные"],
  [2, "", "x", L, "Произвольные многоугольные"],
  [2, "", "x", L, "Произвольные концентрические"],
  [2, "", "x", L, "Произвольные переменные н"],
  [2, "", "x", L, "Области действия"],
  [2, "", "x", L, "Пересечения"],
  [1, "-", "x", L, "Прочие нагрузки"],
  [2, "", "x", L, "Вынужденные деформации узла"],
  [2, "", "x", L, "Вынужденные деформации линии"],
  [2, "", "x", L, "Несовершенства"],
  [1, "-", "x", L, "Созданные нагрузки"],
  [2, "", "o", L, "Отдельно"],
  [1, "", "x", L, "Категория нагрузки Предварительное"],
  [1, "", "x", L, "Различить отрицательные нагрузки"],
  [0, "-", "o", R, "Результаты"],
  [1, "+", "x", R, "Величины результатов"],
  [1, "", "x", R, "Инфо о названии"],
  [1, "", "x", R, "Макс./Мин. - Инфо"],
  [1, "-", "m", R, "Деформация"],
  [2, "+", "m", R, "Стержни"],
  [2, "", "o", R, "Опоры"],
  [2, "", "o", R, "Перемещения узлов"],
  [2, "", "o", R, "Соединительные линии"],
  [2, "", "o", R, "Результаты по соединениям"],
  [2, "", "o", R, "Контуры деформированных п"],
  [2, "", "o", R, "Местные деформации на нулевой"],
  [1, "+", "m", R, "Стержни"],
  [1, "+", "m", R, "Поверхности"],
  [1, "+", "m", R, "Тела"],
  [1, "+", "m", R, "Тип изображения"],
  [1, "+", "x", R, "Ребра - эффективный вклад на поверхности"],
  [1, "", "x", R, "Результирующие балки"],
  [1, "", "o", R, "Результаты внутри площади опоры"],
  [1, "+", "m", R, "Опорные реакции"],
  [1, "", "o", R, "Прозрачно"],
];

const continues = (i: number, level: number) => {
  if (level === 0) return true;
  for (let j = i + 1; j < tree.length; j++) {
    if (tree[j][0] < level) return false;
    if (tree[j][0] === level) return true;
  }
  return false;
};

const TreeCheck = ({ state, id }: { state: Row[2]; id: string }) => {
  const ref = useRef<HTMLInputElement>(null);
  useEffect(() => {
    if (ref.current) ref.current.indeterminate = state === "m";
  }, [state]);
  return <Box ref={ref} id={id} type="checkbox" $mixed={state === "m"} defaultChecked={state === "x"} />;
};

const ScrollV = styled.div`
  display: flex;
  flex-direction: column;
  align-items: center;
  padding: 6px 0;
  i { flex: 1; width: 15px; background: linear-gradient(transparent 11.6%, #cdcdcd 11.6% 52.3%, transparent 52.3%); }
`;
const ScrollH = styled.div`
  grid-column: 1 / 3;
  display: flex;
  align-items: center;
  padding: 0 20px 0 5px;
  i { flex: 1; height: 15px; margin: 0 6px 0 4px; background: linear-gradient(90deg, #cdcdcd 69%, transparent 69%); }
`;
const Chevron = ({ d }: { d: string }) => (
  <svg width="8" height="8" viewBox="0 0 8 8" aria-hidden="true">
    <path d={d} fill="none" stroke="#444" strokeWidth="1.800" />
  </svg>
);
const NavTabs = styled.div`
  display: flex;
  align-items: center;
  flex: none;
  height: 26px;
  padding-left: 4px;
  gap: 6px;
  border-top: 1px solid #8d919c;
`;
const NavTab = styled.button<{ $on?: boolean }>`
  display: flex;
  align-items: center;
  gap: 2px;
  height: 20px;
  padding: 0 3px 0 1px;
  color: #4c5260;
  ${(p) => p.$on && css`background: #e6e9f1; box-shadow: 1px 1px 2px #a9dce4; border-radius: 2px;`}
`;

const NavigatorPane = () => (
  <Navigator>
    <PaneTitle>
      Навигатор проектов - Изобразить
      <svg width="9" height="10" viewBox="0 0 9 10"><path d="M2.500 1v5h4V1zM1 6.500h7M4.500 7v3" fill="none" stroke="#555" /></svg>
      <svg width="8" height="8" viewBox="0 0 8 8"><path d="M0 0l8 8M8 0L0 8" stroke="#555" strokeWidth="1.300" /></svg>
    </PaneTitle>
    <TreeFrame>
      <Tree>
        {tree.map(([depth, exp, state, icon, text], i) => (
          <TreeItem key={i}>
            {Array.from({ length: depth + 1 }, (_, level) => (
              <Guide
                key={level}
                $own={level === depth}
                $line={continues(i, level)}
                $last={level === depth && !continues(i, level)}
              >
                {level === depth && exp && (
                  <Expander aria-label={exp === "+" ? "Развернуть" : "Свернуть"}>
                    <svg width="7" height="7" viewBox="0 0 7 7">
                      <path d={exp === "+" ? "M1 3.500h5M3.500 1v5" : "M1 3.500h5"} stroke="#24418c" />
                    </svg>
                  </Expander>
                )}
              </Guide>
            ))}
            <TreeCheck state={state} id={`tree-${i}`} />
            <TreeLabel htmlFor={`tree-${i}`} $bold={i === 2}>
              <Glyph name={icon} size={16} />
              {text}
            </TreeLabel>
          </TreeItem>
        ))}
      </Tree>
      <ScrollV>
        <Chevron d="M0 6l4-4 4 4" />
        <i />
        <Chevron d="M0 2l4 4 4-4" />
      </ScrollV>
      <ScrollH>
        <Chevron d="M6 0L2 4l4 4" />
        <i />
        <Chevron d="M2 0l4 4-4 4" />
      </ScrollH>
    </TreeFrame>
    <NavTabs>
      <NavTab><Glyph name="navData" size={17} />Данные</NavTab>
      <NavTab $on><Glyph name="navShow" size={17} />Изобразить</NavTab>
      <NavTab><Glyph name="navViews" size={17} />Виды</NavTab>
    </NavTabs>
  </Navigator>
);

/* ------------------------------------------------------------------ */
/* 3D model view                                                        */
/* ------------------------------------------------------------------ */

type Pt = [number, number];
const ORIGIN: Pt = [989.7, 511.3];
const UX: Pt = [27.8, 4.73];
const UY: Pt = [-7.46, 17.6];
const world = (a: number, b: number): Pt => [
  ORIGIN[0] + a * UX[0] + b * UY[0],
  ORIGIN[1] + a * UX[1] + b * UY[1],
];
const path = (pts: Pt[], close = true) =>
  "M" + pts.map(([x, y]) => `${x.toFixed(1)} ${y.toFixed(1)}`).join("L") + (close ? "Z" : "");

const Canvas = styled.section`
  position: relative;
  min-height: 0;
  border: 1px solid #6d7078;
  border-width: 1px 0 0 2px;
  border-bottom: 1px solid #e8e8e8;
  background: #fcfcfc;
  > svg { width: 100%; height: 100%; }
`;

const Head = ({ from, to, color, size = 9, w = 3 }: { from: Pt; to: Pt; color: string; size?: number; w?: number }) => {
  const d = Math.hypot(to[0] - from[0], to[1] - from[1]);
  const ux = (to[0] - from[0]) / d;
  const uy = (to[1] - from[1]) / d;
  const b: Pt = [to[0] - ux * size, to[1] - uy * size];
  return <path d={path([to, [b[0] - uy * w, b[1] + ux * w], [b[0] + uy * w, b[1] - ux * w]])} fill={color} />;
};

const Triad = ({ at, upper }: { at: Pt; upper?: boolean }) => {
  const [x, y] = at;
  const ex: Pt = [x + 39, y + 7];
  const ey: Pt = [x - 11, y + 25];
  const ez: Pt = [x, y + 32];
  return (
    <g fontFamily={gridFont} fontSize="10">
      <path d={path([at, ez], false)} stroke="#00f0f0" strokeWidth="2" />
      <Head from={at} to={ez} color="#009c9c" />
      <path d={path([at, ey], false)} stroke="#00f000" strokeWidth="2" />
      <Head from={at} to={ey} color="#0a9c0a" />
      <path d={path([at, ex], false)} stroke="#ff0000" strokeWidth="2" />
      <Head from={at} to={ex} color="#b80000" size={11} />
      <text x={x + 46} y={y + 13} fill="#ff0000">{upper ? "X" : "x"}</text>
      <text x={x - 15} y={y + 37} fill="#00e800">{upper ? "Y" : "y"}</text>
      <text x={x - 2} y={y + 44} fill="#00f0f0">{upper ? "Z" : "z"}</text>
    </g>
  );
};

const radians = (d: number) => (d * Math.PI) / 180;
/* Support symbols, as offsets from the plate centre. */
const supportsFront: Pt[] = [
  [-144, 1], [-136, 36], [-108, 67], [-63, 89], [-9, 98], [46, 94], [95, 76], [129, 48], [145, 14], [142, -22],
];
const supportsBack: Pt[] = [[-127, -31], [-94, -60], [-46, -78], [10, -84], [64, -73], [108, -52]];

const LoadedPlate = ({ a, selected }: { a: number; selected?: boolean }) => {
  const at = (u: number, v: number, z = 0): Pt => {
    const [x, y] = world(a + u * 5, v * 5);
    return [x, y - z];
  };
  const centre = at(0, 0);
  const full = Array.from({ length: 73 }, (_, i) => at(Math.cos((i * Math.PI) / 36), Math.sin((i * Math.PI) / 36)));
  const arcPts = (sx: number, sy: number, n: number): Pt[] =>
    Array.from({ length: n + 1 }, (_, i) => {
      const t = 0.04 + (i / n) * (Math.PI / 2 - 0.08);
      return [sx * Math.cos(t) * 0.97, sy * Math.sin(t) * 0.97] as Pt;
    });
  const linePts = (p: Pt, q: Pt, n: number): Pt[] =>
    Array.from({ length: n + 1 }, (_, i) => [p[0] + ((q[0] - p[0]) * i) / n, p[1] + ((q[1] - p[1]) * i) / n] as Pt);

  const quarter = (sx: number, sy: number, color: string, fill: string) => {
    const walls: [Pt[], Pt[]][] = [
      [arcPts(sx, sy, 24), arcPts(sx, sy, 8)],
      [linePts([sx * 0.97, sy * 0.04], [sx * 0.04, sy * 0.04], 1), linePts([sx * 0.97, sy * 0.04], [sx * 0.04, sy * 0.04], 5)],
      [linePts([sx * 0.04, sy * 0.04], [sx * 0.04, sy * 0.97], 1), linePts([sx * 0.04, sy * 0.04], [sx * 0.04, sy * 0.97], 5)],
    ];
    return (
      <g stroke={color} strokeWidth="1">
        {walls.map(([edge, ticks], w) => {
          const base = edge.map(([u, v]) => at(u, v, 20));
          const top = edge.map(([u, v]) => at(u, v, 42));
          return (
            <g key={w}>
              <path d={path([...base, ...top.slice().reverse()])} fill={fill} />
              {ticks.map(([u, v], i) => {
                const [x, y] = at(u, v, 42);
                return (
                  <g key={i}>
                    <path d={`M${x} ${y}v20`} />
                    <path d={`M${x - 2.5} ${y + 16}h5l-2.500 6z`} fill={color} stroke="none" />
                  </g>
                );
              })}
            </g>
          );
        })}
      </g>
    );
  };
  const support = ([dx, dy]: Pt, color: string) => {
    const x = centre[0] + dx;
    const y = centre[1] + dy;
    return (
      <g key={dx} fill={color}>
        <path d={`M${x - 4} ${y - 6}l12 2-4 9-13-2z`} opacity=".8" />
        <path d={`M${x - 3} ${y - 4}h6v10l-3 2-3-2z`} opacity=".8" />
      </g>
    );
  };
  const wedge = [at(0, 0), ...Array.from({ length: 19 }, (_, i) => {
    const t = Math.PI / 2 + (i * Math.PI) / 36;
    return at(Math.cos(t), Math.sin(t));
  })];
  const navy = "#000088";
  const wallFill = "rgba(0,0,136,.18)";
  const redNodes = [0, 45, 90, 135, 180, 225, 270, 315].map(radians);

  return (
    <g fill="none">
      {supportsFront.map((s) => support(s, "#18dc18"))}
      <path d={path(full)} fill="#7d7de0" stroke="#10e010" strokeWidth="1.500" />
      <path d={path([at(-1, 0), ...Array.from({ length: 37 }, (_, i) => {
        const t = Math.PI + (i * Math.PI) / 36;
        return at(Math.cos(t), Math.sin(t));
      })])} fill="#7373dc" />
      {supportsBack.map((s) => support(s, "#466aa6"))}
      {quarter(-1, -1, navy, wallFill)}
      {quarter(1, -1, navy, wallFill)}
      {quarter(-1, 1, navy, wallFill)}
      {quarter(1, 1, navy, wallFill)}
      {selected && (
        <>
          <clipPath id="picked-wedge">
            <path d={path(wedge)} />
          </clipPath>
          <path d={path(wedge)} fill="#ecec40" stroke="#8ae818" />
          <g clipPath="url(#picked-wedge)">{quarter(-1, 1, "#a4a41c", "rgba(130,130,20,.2)")}</g>
        </>
      )}
      <path d={path([at(-1, 0), at(1, 0)], false)} stroke="#111" />
      <path d={path([at(0, -1), at(0, 1)], false)} stroke="#111" />
      {redNodes.map((t) => {
        const [x, y] = at(Math.cos(t), Math.sin(t));
        return <rect key={t} x={x - 1.5} y={y - 1.5} width="3" height="3" fill="#f00000" />;
      })}
      {([[-1, -1], [1, -1], [-1, 1], [1, 1]] as Pt[]).map(([u, v]) => (
        <Triad key={`${u}${v}`} at={at(u * 0.425, v * 0.42)} />
      ))}
      <g fill={navy} fontFamily={gridFont} fontSize="9">
        <text x={at(0, -1)[0] - 13} y={at(0, -1)[1] - 47}>2.00</text>
        <text x={at(-1, 0)[0] - 2} y={at(-1, 0)[1] - 45}>2.00</text>
        <text x={at(1, 0)[0] - 11} y={at(1, 0)[1] - 53}>2.00</text>
        <text x={at(0, 1)[0]} y={at(0, 1)[1] - 53}>2.00</text>
      </g>
    </g>
  );
};

const gridDots = (() => {
  let d = "";
  for (let a = -50; a <= 50; a++)
    for (let b = -40; b <= 45; b++) {
      const [x, y] = world(a, b);
      if (x > 288 && x < 2600 && y > 98 && y < 1600) d += `M${Math.round(x)} ${Math.round(y)}h1v1h-1z`;
    }
  return d;
})();

const ModelView = () => (
  <svg role="img" aria-label="Модель">
    <g transform="translate(-291 -101)">
      {[-40, -30, -20, -10, 10, 20, 30].map((k) => (
        <g key={k} stroke="#ececec" fill="none">
          <path d={path([world(-60, k), world(60, k)], false)} />
          <path d={path([world(k, -60), world(k, 60)], false)} />
        </g>
      ))}
      <path d={gridDots} fill="#222" />
      <path d={path([world(-60, 0), world(60, 0)], false)} stroke="#128080" strokeWidth="1.200" />
      <path d={path([world(0, -60), world(0, 60)], false)} stroke="#128080" strokeWidth="1.200" />
      <LoadedPlate a={-13} selected />
      <LoadedPlate a={0} />
      <Triad at={[346, 791]} upper />
      <g fontFamily={gridFont} fontSize="11">
        <text x="295" y="117">ЗГ1</text>
        <text x="295" y="131">Нагрузки [kH/м^2]</text>
      </g>
    </g>
  </svg>
);

/* ------------------------------------------------------------------ */
/* Dialog                                                               */
/* ------------------------------------------------------------------ */

const Dialog = styled.div`
  position: absolute;
  left: 595px;
  top: 149px;
  width: 646px;
  border: 1px solid #6a6a6a;
  background: #f0f0f0;
  box-shadow: 3px 4px 14px rgba(0, 0, 0, 0.4);
  font: 11px/13px ${gridFont};
`;
const DialogTitle = styled.div`
  display: flex;
  align-items: center;
  justify-content: space-between;
  height: 26px;
  padding: 0 10px 2px 3px;
  background: #fff;
  h1 { margin: 0; font: 11px/16px ${uiFont}; }
  button { display: grid; }
`;
const TabStack = styled.div`
  margin: 8px 9px 0 6px;
`;
const TabRow = styled.div<{ $columns: string }>`
  display: grid;
  grid-template-columns: ${(p) => p.$columns};
  margin: 0 2px;
`;
const Tab = styled.button<{ $on?: boolean }>`
  height: 18px;
  border: 1px solid #d9d9d9;
  border-width: 1px 1px 0 0;
  background: #f0f0f0;
  &:first-child { border-left-width: 1px; }
  ${(p) =>
    p.$on &&
    css`
      height: 21px;
      margin: -2px 0 -1px -2px;
      padding: 0 10px 1px 0;
      background: #fff;
      z-index: 1;
    `}
`;
const TabPage = styled.div`
  display: grid;
  grid-template-columns: 319px 287px;
  column-gap: 8px;
  padding: 9px 6px 8px 8px;
  border: 1px solid #d9d9d9;
  background: #fff;
`;
const Group = styled.fieldset`
  min-width: 0;
  margin: 0;
  padding: 0 2px;
  border: 1px solid #e0e7f5;
  border-right: 1px solid #a9aeee;
  border-bottom: 1px solid #a9aeee;
  border-top: 0;
  background: #f0f4fa;
  legend {
    float: left;
    width: calc(100% + 4px);
    height: 17px;
    margin: 0 -2px;
    padding: 0 1px;
    border-bottom: 1px solid #fff;
    background: linear-gradient(225deg, #fff 7px, #dce6f5 8px);
    color: #1d4a7c;
    font: 11px/16px ${gridFont};
  }
`;
const GroupBody = styled.div`
  clear: both;
`;
const SurfaceField = styled.input`
  display: block;
  width: 100%;
  height: 20px;
  padding: 0 3px;
  border: 1px solid #787878;
  background: #f0f0f0;
  outline: none;
`;
const SurfaceBody = styled(GroupBody)`
  padding: 3px 1px 5px;
`;
const InnerTabs = styled.div`
  display: flex;
  align-items: flex-end;
  margin: 8px 0 0 2px;
  height: 21px;
`;
const InnerTab = styled.button<{ $on?: boolean }>`
  height: ${(p) => (p.$on ? 21 : 18)}px;
  padding: ${(p) => (p.$on ? "0 8px 0 6px" : "0 3px 0 4px")};
  border: 1px solid #d9d9d9;
  border-bottom: 0;
  background: ${(p) => (p.$on ? "#fff" : "#f0f0f0")};
  margin-bottom: ${(p) => (p.$on ? -1 : 0)}px;
  z-index: ${(p) => (p.$on ? 1 : 0)};
  & + & { margin-left: -1px; }
`;
const InnerPage = styled.div`
  padding: 7px 4px 6px 5px;
  border: 1px solid #d9d9d9;
`;
const Block = styled.div<{ $h: number; $top?: number; $bottom?: number }>`
  display: flex;
  flex-direction: column;
  justify-content: center;
  height: ${(p) => p.$h}px;
  padding: ${(p) => p.$top ?? 0}px 0 ${(p) => p.$bottom ?? 0}px;
  & + & {
    border-top: 1px solid #999;
    box-shadow: inset 0 1px #fff;
  }
`;
const Line = styled.div<{ $h?: number }>`
  display: flex;
  align-items: center;
  min-height: ${(p) => p.$h ?? 20}px;
`;
const AxisColumns = styled.div`
  display: grid;
  grid-template-columns: 53px 33px 1fr;
  align-items: start;
`;
const PointFields = styled.div`
  margin-top: 11px;
`;
const Radio = styled.input`
  appearance: none;
  display: grid;
  place-items: center;
  flex: none;
  width: 13px;
  height: 13px;
  margin: 0;
  border: 1px solid #333;
  border-radius: 50%;
  background: #fff;
  &:checked::after {
    content: "";
    width: 7px;
    height: 7px;
    border-radius: 50%;
    background: #333;
  }
`;
const Choice = styled.label`
  display: flex;
  align-items: flex-start;
  gap: 2px;
`;
const Spin = styled.div<{ $off?: boolean }>`
  display: flex;
  gap: 1px;
  width: 83px;
  height: 20px;
  padding: 1px;
  border: 1px solid #7d9cc0;
  background: ${(p) => (p.$off ? "#f0f0f0" : "#fff")};
  input {
    flex: 1;
    min-width: 0;
    padding: 0 5px 0 0;
    border: 0;
    background: transparent;
    text-align: right;
    outline: none;
  }
`;
const SpinKeys = styled.span`
  display: grid;
  gap: 1px;
  width: 13px;
`;
const SpinKey = styled.button<{ $off?: boolean }>`
  display: grid;
  place-items: center;
  min-width: 9px;
  border: 1px solid #b4b4b4;
  background: #e8e8e8;
  color: ${(p) => (p.$off ? "#777" : "#000")};
`;
const PushButton = styled.button<{ $off?: boolean }>`
  display: grid;
  place-items: center;
  flex: none;
  width: 25px;
  height: 21px;
  border: 1px solid #adadad;
  background: ${(p) => (p.$off ? "#cccccc" : "#e3e3e3")};
`;
const Push = styled.span<{ $right: number }>`
  margin: 0 ${(p) => p.$right}px 0 auto;
  display: flex;
  gap: 5px;
`;
const Muted = styled.span`
  color: #777;
`;
const AxisLabel = styled.label<{ $w: number; $muted?: boolean }>`
  width: ${(p) => p.$w}px;
  padding-right: 6px;
  text-align: right;
  color: ${(p) => (p.$muted ? "#777" : "#000")};
`;
const Unit = styled.span`
  margin-left: 5px;
`;
const SystemSelect = styled.div`
  display: grid;
  width: 162px;
  height: 21px;
  margin: 0 4px 0 17px;
  border: 1px solid #bfbfbf;
  background: #ccc;
  color: #707070;
  align-items: center;
  select { grid-area: 1 / 1; height: 19px; appearance: none; border: 0; padding: 0 3px; background: transparent; opacity: 1; }
  svg { grid-area: 1 / 1; justify-self: end; margin-right: 5px; pointer-events: none; }
`;
const Preview = styled.figure`
  display: grid;
  margin: 0;
  border: 1px solid #999;
  border-width: 1px 0 0 1px;
  background: linear-gradient(220deg, #fff4dc, #fffcf0 50%, #fff 85%);
  figcaption { grid-area: 1 / 1; padding: 1px 2px; line-height: 14px; }
  svg { grid-area: 1 / 1; }
`;
const Footer = styled.div`
  display: flex;
  align-items: center;
  gap: 10px;
  padding: 10px 7px 7px;
`;
const ActionButton = styled.button<{ $main?: boolean }>`
  width: 73px;
  height: 21px;
  border: ${(p) => (p.$main ? "2px solid #0078d7" : "1px solid #adadad")};
  background: #e1e1e1;
`;
const Spacer = styled.span`
  flex: 1;
`;

const SpinBox = ({ id, value, off }: { id: string; value: string; off?: boolean }) => (
  <Spin $off={off}>
    <input id={id} defaultValue={value} disabled={off} />
    <SpinKeys>
      {["M0 3h5L2.500 0z", "M0 0h5L2.500 3z"].map((d) => (
        <SpinKey key={d} $off={off} aria-label="Шаг">
          <svg width="5" height="3" viewBox="0 0 5 3"><path d={d} fill="currentColor" /></svg>
        </SpinKey>
      ))}
    </SpinKeys>
    <SpinKey $off={off} aria-label="Больше">
      <svg width="4" height="6" viewBox="0 0 4 6"><path d="M0 0v6l4-3z" fill="currentColor" /></svg>
    </SpinKey>
  </Spin>
);

/* Coordinates of the help drawing are kept on its own 990 x 1568 sheet. */
const sheet = (x: number, y: number): Pt => [x / 3 - 10, y / 2.85 - 87];
const Arrow = ({ from, to, color }: { from: Pt; to: Pt; color: string }) => (
  <g>
    <path d={path([sheet(...from), sheet(...to)], false)} stroke={color} strokeWidth="1.200" />
    <Head from={sheet(...from)} to={sheet(...to)} color={color} size={6} w={2.2} />
  </g>
);
const RED = "#e02020";
const GREEN = "#0a9848";
const BLUE = "#353490";
type Local = { o: Pt; x: Pt; y: Pt; tx: Pt; ty: Pt; tz: Pt };
const locals: Local[] = [
  { o: [378, 761], x: [428, 770], y: [328, 781], tx: [423, 760], ty: [321, 770], tz: [355, 800] },
  { o: [406, 799], x: [430, 820], y: [368, 806], tx: [428, 817], ty: [357, 821], tz: [384, 837] },
  { o: [296, 843], x: [336, 858], y: [260, 859], tx: [337, 853], ty: [250, 853], tz: [276, 883] },
  { o: [187, 888], x: [236, 893], y: [149, 912], tx: [228, 882], ty: [138, 905], tz: [168, 937] },
  { o: [460, 873], x: [484, 892], y: [418, 889], tx: [476, 907], ty: [416, 872], tz: [442, 915] },
  { o: [351, 916], x: [384, 919], y: [321, 934], tx: [390, 925], ty: [306, 918], tz: [330, 963] },
  { o: [567, 829], x: [556, 870], y: [520, 832], tx: [545, 857], ty: [501, 836], tz: [577, 860] },
  { o: [732, 858], x: [690, 876], y: [686, 854], tx: [702, 891], ty: [701, 843], tz: [743, 893] },
  { o: [624, 903], x: [585, 916], y: [580, 897], tx: [602, 934], ty: [594, 886], tz: [635, 935] },
  { o: [514, 947], x: [534, 933], y: [546, 965], tx: [492, 948], ty: [539, 982], tz: [496, 993] },
];
const SheetText = ({ at, color, size, children }: { at: Pt; color: string; size: number; children: string }) => {
  const [x, y] = sheet(...at);
  return <text x={x} y={y} fill={color} fontSize={size} fontFamily="Roboto, sans-serif">{children}</text>;
};
const PreviewDrawing = () => {
  const line = (...p: Pt[]) => path(p.map(([x, y]) => sheet(x, y)), false);
  const target: Pt = [537, 932];
  return (
    <svg width="285" height="407" fill="none" aria-hidden="true">
      <path d={line([378, 761], [868, 851], [544, 985], [53, 895], [378, 761])} fill="#eaeceb" stroke="#444" />
      <path
        d={line([270, 806], [760, 897]) + line([162, 850], [652, 941]) + line([541, 792], [217, 926]) + line([705, 822], [381, 956])}
        stroke="#222"
      />
      {locals.slice(0, 9).map((l) => (
        <path key={l.o.join()} d={line(l.o, target)} stroke="#333" strokeWidth=".8" strokeDasharray="2 2" />
      ))}
      <path d={line([537, 569], target)} stroke="#444" strokeWidth="2" strokeDasharray="2 2" />
      <circle cx={sheet(537, 0)[0]} cy={sheet(0, 569)[1]} r="3.200" fill="#444" />
      <circle cx={sheet(537, 0)[0]} cy={sheet(0, 932)[1]} r="3.200" fill="#444" />
      {locals.map((l) => (
        <g key={l.o.join()}>
          <Arrow from={l.o} to={l.x} color={RED} />
          <Arrow from={l.o} to={l.y} color={GREEN} />
          <Arrow from={l.o} to={[l.o[0], l.o[1] + 38]} color={BLUE} />
          <circle cx={sheet(...l.o)[0]} cy={sheet(...l.o)[1]} r="2" fill="#a83a8c" />
          <SheetText at={l.tx} color={RED} size={8}>x</SheetText>
          <SheetText at={l.ty} color={GREEN} size={8}>y</SheetText>
          <SheetText at={l.tz} color={BLUE} size={8}>z</SheetText>
        </g>
      ))}
      <Arrow from={[231, 403]} to={[322, 419]} color={RED} />
      <Arrow from={[231, 403]} to={[146, 437]} color={GREEN} />
      <Arrow from={[231, 403]} to={[231, 480]} color={BLUE} />
      <SheetText at={[331, 439]} color={RED} size={16}>X</SheetText>
      <SheetText at={[108, 460]} color={GREEN} size={16}>Y</SheetText>
      <SheetText at={[217, 519]} color={BLUE} size={16}>Z</SheetText>
      <SheetText at={[570, 578]} color="#444" size={14}>[X,Y,Z]</SheetText>
    </svg>
  );
};

const SurfaceDialog = () => (
  <Dialog role="dialog" aria-labelledby="dlg-title">
    <DialogTitle>
      <h1 id="dlg-title">Изменить поверхность</h1>
      <button aria-label="Закрыть">
        <svg width="10" height="10" viewBox="0 0 10 10"><path d="M0 0l10 10M10 0L0 10" stroke="#111" /></svg>
      </button>
    </DialogTitle>
    <TabStack>
      <TabRow $columns="133px 171px 93px 93px 1fr">
        <Tab>Общие сведения</Tab>
        <Tab>Опора / эксцентриситет</Tab>
        <Tab>Сетка КЭ</Tab>
        <Tab>Шарниры</Tab>
        <Tab>Интегрированные</Tab>
      </TabRow>
      <TabRow $columns="164px 224px 1fr">
        <Tab $on>Оси</Tab>
        <Tab>Балочная решетка</Tab>
        <Tab>Изменить жесткость</Tab>
      </TabRow>
      <TabPage>
        <div>
          <Group>
            <legend>Поверхность №</legend>
            <SurfaceBody>
              <SurfaceField aria-label="Поверхность №" defaultValue="15" readOnly />
            </SurfaceBody>
          </Group>
          <InnerTabs>
            <InnerTab>Оси для исх. данных</InnerTab>
            <InnerTab $on>Оси для результатов</InnerTab>
          </InnerTabs>
          <InnerPage>
            <Group>
              <legend>Направление</legend>
              <GroupBody>
                <Block $h={28} $top={2}>
                  <Choice><Radio type="radio" name="dir" />Идентично осям для ввода</Choice>
                </Block>
                <Block $h={58} $bottom={6}>
                  <Line $h={24}>
                    <Choice><Radio type="radio" name="dir" />Наклон к осям при вводе</Choice>
                  </Line>
                  <Line $h={22}>
                    <AxisLabel $w={38} $muted htmlFor="alpha">α :</AxisLabel>
                    <SpinBox id="alpha" value="" off />
                    <Unit><Muted>[°]</Muted></Unit>
                    <Push $right={3}>
                      <PushButton $off aria-label="Указать x"><Glyph name="pickX" size={18} /></PushButton>
                      <PushButton $off aria-label="Указать y"><Glyph name="pickY" size={18} /></PushButton>
                    </Push>
                  </Line>
                </Block>
                <Block $h={112}>
                  <AxisColumns>
                    <Line $h={24}>
                      <Choice><Radio type="radio" name="dir" defaultChecked />Ось:</Choice>
                    </Line>
                    <div>
                      <Line $h={24}>
                        <Choice><Radio type="radio" name="axis" defaultChecked />x</Choice>
                      </Line>
                      <Line $h={14}>
                        <Choice><Radio type="radio" name="axis" />y</Choice>
                      </Line>
                    </div>
                    <div>
                      <Line $h={24}>
                        Направить к точке:
                        <Push $right={33}>
                          <PushButton aria-label="Указать точку"><Glyph name="pick" size={18} /></PushButton>
                        </Push>
                      </Line>
                      <PointFields>
                        {[["X", "-20.000"], ["Y", "0.000"], ["Z", "0.000"]].map(([n, v]) => (
                          <Line key={n} $h={23}>
                            <AxisLabel $w={16} htmlFor={`pt-${n}`}>{n}:</AxisLabel>
                            <SpinBox id={`pt-${n}`} value={v} />
                            <Unit>[м]</Unit>
                          </Line>
                        ))}
                      </PointFields>
                    </div>
                  </AxisColumns>
                </Block>
                <Block $h={39} $top={4}>
                  <Choice>
                    <Radio type="radio" name="dir" />
                    <span>Оси параллельно общей<br />системе координат XYZ</span>
                  </Choice>
                </Block>
                <Block $h={64} $top={5}>
                  <Choice>
                    <Radio type="radio" name="dir" />
                    <span>Оси параллельно пользовательской<br />системе координат:</span>
                  </Choice>
                  <Line $h={30}>
                    <SystemSelect>
                      <select aria-label="Система координат" disabled><option>Общие XYZ</option></select>
                      <svg width="8" height="5" viewBox="0 0 8 5"><path d="M0 0l4 4 4-4" fill="none" stroke="#999" /></svg>
                    </SystemSelect>
                    <PushButton $off aria-label="Изменить систему"><Glyph name="csEdit" size={18} /></PushButton>
                  </Line>
                </Block>
              </GroupBody>
            </Group>
          </InnerPage>
        </div>
        <Preview>
          <PreviewDrawing />
          <figcaption>
            Оси для результатов
            <br />
            Направить к точке
          </figcaption>
        </Preview>
      </TabPage>
    </TabStack>
    <Footer>
      <PushButton aria-label="Справка"><Glyph name="help" size={18} /></PushButton>
      <PushButton $off aria-label="Комментарий"><Glyph name="edit" size={18} /></PushButton>
      <PushButton aria-label="Единицы"><Glyph name="units" size={18} /></PushButton>
      <PushButton aria-label="Показать"><Glyph name="eye" size={18} /></PushButton>
      <PushButton aria-label="Указать"><Glyph name="pickDoc" size={18} /></PushButton>
      <Spacer />
      <ActionButton $main>OK</ActionButton>
      <ActionButton>Отмена</ActionButton>
    </Footer>
  </Dialog>
);

/* ------------------------------------------------------------------ */
/* Load table                                                           */
/* ------------------------------------------------------------------ */

const Main = styled.main`
  display: grid;
  grid-template-rows: minmax(0, 1fr) auto;
  row-gap: 5px;
  min-width: 0;
  min-height: 0;
  padding-top: 1px;
`;
const TablePane = styled.section`
  display: flex;
  flex-direction: column;
  height: 206px;
  min-width: 0;
  background: #f0f0f0;
  font: 11px/14px ${gridFont};
`;
const TableTitle = styled(PaneTitle)`
  margin: 0;
  border-top: 1px solid #e8ecf4;
`;
const TableBand = styled(Band)`
  flex: none;
  height: 26px;
  padding-left: 9px;
  border-radius: 0;
  border-bottom: 1px solid #666b76;
`;
const Sheet = styled.div`
  padding: 2px 0 0 1px;
  overflow: hidden;
  border-left: 1px solid #888;
  background: #f0f0f0;
`;
const Grid = styled.table`
  table-layout: fixed;
  width: 1606px;
  border-collapse: separate;
  border-spacing: 0;
  border-top: 1px solid #666;
  border-left: 1px solid #666;
  th, td {
    height: 16px;
    padding: 0;
    overflow: hidden;
    border: 0 solid #a0a0a0;
    border-width: 0 1px 1px 0;
    font-weight: 400;
    line-height: 15px;
    text-align: center;
    white-space: nowrap;
  }
  sup, sub { font-size: 9px; line-height: 1; }
`;
const Letter = styled.th<{ $on?: boolean }>`
  && {
    height: 15px;
    border-color: #666;
    line-height: 13px;
    background: ${(p) => (p.$on ? "#3399ff" : "#e1e1e1")};
    color: ${(p) => (p.$on ? "#fff" : "#000")};
    box-shadow: inset 1px 1px #fff;
  }
`;
const Title = styled.th<{ $open?: boolean; $low?: boolean }>`
  && {
    height: ${(p) => (p.$open ? 16 : 17)}px;
    padding-bottom: ${(p) => (p.$low ? 7 : p.$open ? 2 : 3)}px;
    border-bottom-width: ${(p) => (p.$open ? 0 : 1)}px;
    line-height: 13px;
    vertical-align: bottom;
    white-space: normal;
  }
`;
const RowHead = styled.th<{ $on?: boolean }>`
  && {
    border-color: #666;
    background: ${(p) => (p.$on ? "#3399ff" : "#e1e1e1")};
    color: ${(p) => (p.$on ? "#fff" : "#000")};
    line-height: 14px;
    box-shadow: inset 1px 1px #fff;
  }
`;
const Cell = styled.td<{ $white?: boolean; $align?: string; $focus?: boolean }>`
  && {
    padding: 0 3px;
    background: ${(p) => (p.$white ? "#fff" : "#f0f0f0")};
    text-align: ${(p) => p.$align ?? "center"};
    outline: ${(p) => (p.$focus ? "1px dotted #000" : "none")};
    outline-offset: -1px;
  }
`;
const SheetTabs = styled.div`
  display: flex;
  margin-top: 8px;
  padding-bottom: 1px;
  border-left: 1px solid #888;
  border-bottom: 1px solid #dcdcdc;
`;
const SheetTab = styled.button<{ $on?: boolean }>`
  flex: none;
  height: 17px;
  padding: 0 8px 0 4px;
  border: 1px solid #666;
  border-left: 0;
  border-top-color: ${(p) => (p.$on ? "transparent" : "#666")};
  border-radius: 0 0 4px 4px;
  background: ${(p) => (p.$on ? "#f0f0f0" : "#e1e1e1")};
`;

const columns = [46, 132, 84, 72, 54, 42, 72, 72, 42, 72, 72, 42, 72, 72];
const sheetTabs = [
  "Узловые нагрузки",
  "Нагрузки на стержень",
  "Нагрузки на линию",
  "Нагрузки на поверхность",
  "Нагрузки на тело",
  "Произвольные сосредоточенные нагрузки",
  "Произвольные распределенные нагрузки",
  "Произвольные прямоугольные нагрузки",
  "Произвольные концентричные нагрузки",
];

const LoadTable = () => (
  <Grid>
    <colgroup>
      {columns.map((w, i) => <col key={i} width={w} />)}
      <col />
    </colgroup>
    <thead>
      <tr>
        <Title rowSpan={3} $low>№</Title>
        {"ABCDEFGHIJKLMN".split("").map((c) => <Letter key={c} $on={c === "A"}>{c}</Letter>)}
      </tr>
      <tr>
        <Title rowSpan={2}>На поверхностях №</Title>
        <Title rowSpan={2}>Тип нагрузки</Title>
        <Title $open>Распред.</Title>
        <Title $open>Направл.</Title>
        <Title $open colSpan={3}>1-я угловая точка</Title>
        <Title $open colSpan={3}>2-я угловая точка</Title>
        <Title $open colSpan={3}>3-я угловая точка</Title>
        <Title rowSpan={2}>Комментарий</Title>
      </tr>
      <tr>
        <Title>нагрузки</Title>
        <Title>нагрузки</Title>
        <Title>№</Title>
        <Title>p [kH/м<sup>2</sup>]</Title>
        <Title />
        <Title>№</Title>
        <Title>p <sub>2</sub></Title>
        <Title />
        <Title>№</Title>
        <Title>p <sub>3</sub></Title>
        <Title />
      </tr>
    </thead>
    <tbody>
      <tr>
        <RowHead $on scope="row">1</RowHead>
        <Cell $white $focus $align="left">9-20</Cell>
        <Cell $white><u>С</u>ила</Cell>
        <Cell $white><u>П</u>остоянная</Cell>
        <Cell $white={false}>ZL</Cell>
        <Cell />
        <Cell $white $align="right">2.00</Cell>
        {Array.from({ length: 7 }, (_, i) => <Cell key={i} />)}
        <Cell $white />
      </tr>
      {[2, 3, 4].map((n) => (
        <tr key={n}>
          <RowHead scope="row">{n}</RowHead>
          {Array.from({ length: 14 }, (_, i) => <Cell key={i} $white={i < 3} />)}
        </tr>
      ))}
    </tbody>
  </Grid>
);

/* ------------------------------------------------------------------ */
/* Status bar                                                           */
/* ------------------------------------------------------------------ */

const StatusBar = styled.footer`
  display: flex;
  align-items: center;
  justify-content: flex-end;
  flex: none;
  gap: 2px;
  height: 21px;
  border-top: 1px solid #9a9ea8;
  background: linear-gradient(#d9dce3, #c2c6d0 45%, #a9aeb9 50%, #b9bdc8);
  font: 12px/16px ${gridFont};
`;
const Toggle = styled.button<{ $w: number }>`
  width: ${(p) => p.$w}px;
  height: 19px;
  border: 1px solid #fff;
  border-top-color: #222;
  border-left-color: #222;
  background: #b4b9c4;
  color: #222;
  white-space: nowrap;
`;
const StatusCell = styled.span<{ $w: number }>`
  width: ${(p) => p.$w}px;
  height: 18px;
  border-right: 1px solid #989ca6;
`;

export default function App() {
  return (
    <Window>
      <GlobalStyle />
      <TitleBar>
        <svg width="16" height="18" viewBox="0 0 16 18" aria-hidden="true">
          <path d="M5 4l5-3 5 3v8l-5 4-5-3z" fill="#5c7396" stroke="#2b3c58" />
          <path d="M7 5l3-2 3 2M7 8l6-1" stroke="#a9c0de" fill="none" />
          <text x="1" y="16" fontSize="12" fontWeight="700" fontFamily={gridFont} fill="#f2b800" stroke="#705000" strokeWidth=".5">5</text>
        </svg>
        RFEM 5.22.01 x64 - [200630_Fe-Achsen (1), ЗГ1*]
      </TitleBar>
      <MenuBar>
        <Grip />
        <svg width="16" height="13" viewBox="0 0 16 13" aria-hidden="true">
          <rect width="16" height="13" fill="#1d2560" />
          <path d="M0 8.500h16M1 8l6-6v9M7 2l7 6M4 5v3M10 5v3M0 11l16-1" stroke="#fff" fill="none" />
        </svg>
        {menus.map(([a, u, b]) => (
          <MenuButton key={a + u + b}>{a}<u>{u}</u>{b}</MenuButton>
        ))}
      </MenuBar>
      <BarRow $h={26}>
        <Band>
          <Grip />
          <Tools items="new open boxO boxB save clip print preview | undo redo | poly selC target selBox layer | +list +table | starLoad" />
          <LoadCaseSelect width={216} id="lc-main" />
          <Tools items="prev next +zoomLoad +xxx eyeLoad xxxDim | glasses calcA calcB" />
        </Band>
        <Band>
          <Grip />
          <Tools items="handGrid snap +planeA planeB planeC gridR find | nodes rotate mirror explode info gear gears" />
        </Band>
        <Band>
          <Grip />
          <Tools items="modA modB modC modD" />
        </Band>
      </BarRow>
      <BarRow $h={25}>
        <Band>
          <Grip />
          <Tools items="mkNode.v mkLine mkMember.v mkPoly.v | mkSupport mkLineSup mkSurfSup | dim.v annot guides | mkSurf.v mkOpen.v mkSolidA.v mkSolidB mkSolidC.v | hinge.v loadN loadM loadL loadS loadV.v" />
        </Band>
        <Band>
          <Grip />
          <Tools items="pan zoomWin zoomX cube iso | axX axY axZ axN.v clipView.v | solid.v" />
        </Band>
        <Band>
          <Grip />
          <Tools items="frame roll | resN resS resV resR resC panels.v section rep | doc tune.v colorBar.v" />
        </Band>
      </BarRow>
      <Workspace>
        <NavigatorPane />
        <Main>
          <Canvas>
            <ModelView />
            <SurfaceDialog />
          </Canvas>
          <TablePane>
            <TableTitle>3.4 Нагрузки на поверхность</TableTitle>
            <TableBand>
              <Tools items="tNew tPlus +tLoad tRes tWave | tLeft tRight | +curA +curB sync | dPlus dStar dDots | dX | rowDel rowOut rowIn | fmtA fmtB fmtC | +calcY | starLoad tEdit |" />
              <LoadCaseSelect width={196} id="lc-table" />
              <Tools items="| prev | next | rowsUp rowsUp | glasses | excel | calc | abEq fx fxDel" />
            </TableBand>
            <Sheet>
              <LoadTable />
            </Sheet>
            <SheetTabs>
              {sheetTabs.map((t, i) => <SheetTab key={t} $on={i === 3}>{t}</SheetTab>)}
            </SheetTabs>
          </TablePane>
        </Main>
      </Workspace>
      <StatusBar>
        <Toggle $w={36}>ФИКС</Toggle>
        <Toggle $w={40}>СЕТКА</Toggle>
        <Toggle $w={50}>ДЕКАРТ</Toggle>
        <Toggle $w={44}>ФИКОБ</Toggle>
        <Toggle $w={46}>НАПИН</Toggle>
        <Toggle $w={28}>DXF</Toggle>
        <StatusCell $w={188} />
        <StatusCell $w={86} />
        <StatusCell $w={73} />
      </StatusBar>
    </Window>
  );
}
